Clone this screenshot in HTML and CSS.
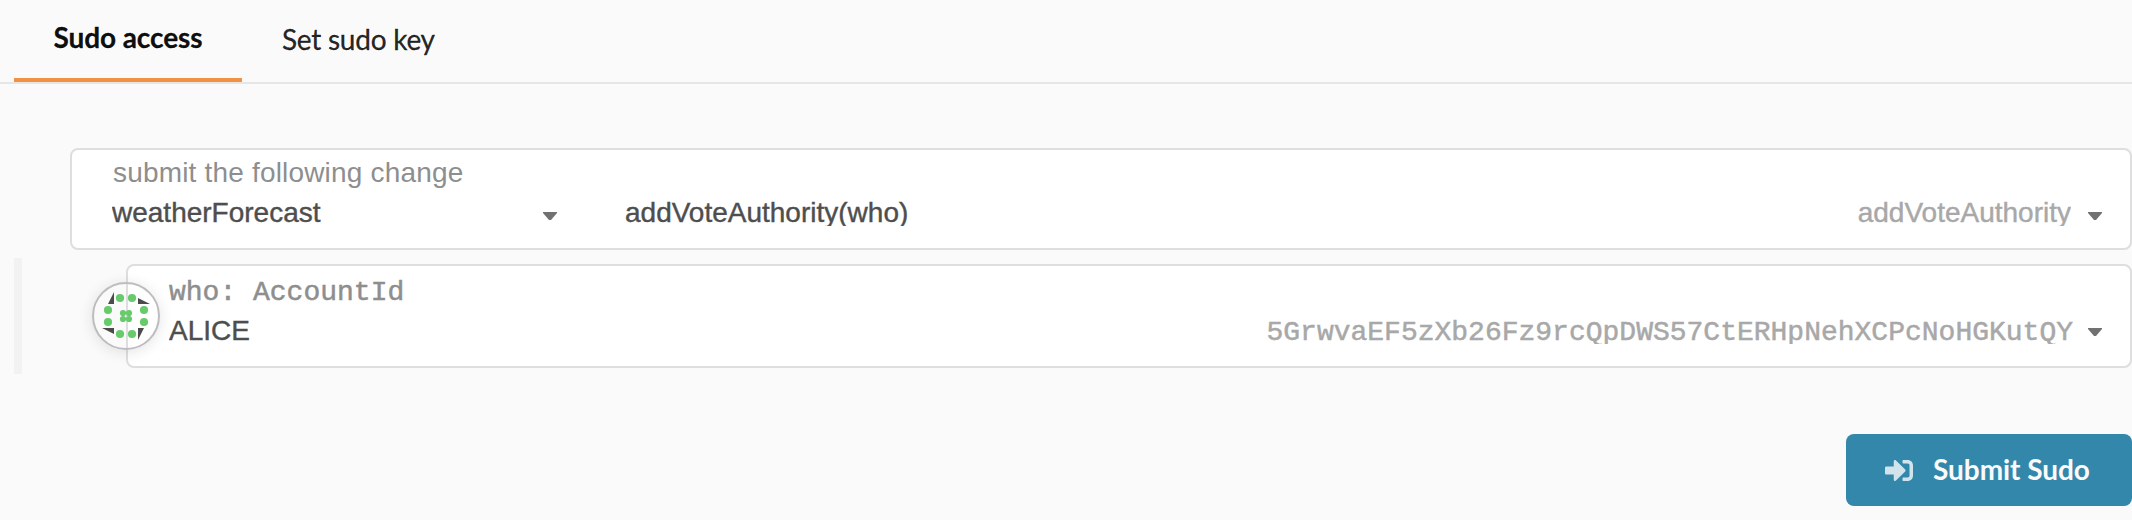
FILE: index.html
```html
<!DOCTYPE html>
<html lang="en">
<head>
<meta charset="utf-8">
<title>Sudo</title>
<link rel="stylesheet" href="styles.css">
</head>
<body>
<nav class="tabs">
  <a class="tab tab-active">Sudo access</a>
  <a class="tab">Set sudo key</a>
</nav>
<main class="content">
  <section class="card call-card">
    <div class="label">submit the following change</div>
    <div class="row">
      <div class="section-select">
        <span class="value">weatherForecast</span>
        <svg class="caret" viewBox="0 0 14 8"><path d="M0 0h14v1L8 8H6L0 1z"/></svg>
      </div>
      <div class="method-select">
        <span class="value">addVoteAuthority(who)</span>
        <span class="value muted">addVoteAuthority</span>
        <svg class="caret" viewBox="0 0 14 8"><path d="M0 0h14v1L8 8H6L0 1z"/></svg>
      </div>
    </div>
  </section>
  <section class="params">
    <div class="card account-card">
      <div class="identicon">
        <svg viewBox="94 284 64 64">
          <g fill="#4b4b4b">
            <path d="M114 292v12h-6z"/>
            <path d="M138 298l12 6h-12z"/>
            <path d="M138 328h6l-6 12z"/>
            <path d="M102 328h12v6z"/>
          </g>
          <g fill="#67cb6c">
            <circle cx="120" cy="298" r="4.100"/><circle cx="132" cy="298" r="4.100"/>
            <circle cx="108" cy="310" r="4.100"/><circle cx="144" cy="310" r="4.100"/>
            <circle cx="108" cy="322" r="4.100"/><circle cx="144" cy="322" r="4.100"/>
            <circle cx="120" cy="334" r="4.100"/><circle cx="132" cy="334" r="4.100"/>
            <circle cx="123" cy="313" r="3.100"/><circle cx="129" cy="313" r="3.100"/>
            <circle cx="123" cy="319" r="3.100"/><circle cx="129" cy="319" r="3.100"/>
          </g>
        </svg>
      </div>
      <div class="label mono">who: AccountId</div>
      <div class="row">
        <span class="value name">ALICE</span>
        <span class="value muted mono">5GrwvaEF5zXb26Fz9rcQpDWS57CtERHpNehXCPcNoHGKutQY</span>
        <svg class="caret" viewBox="0 0 14 8"><path d="M0 0h14v1L8 8H6L0 1z"/></svg>
      </div>
    </div>
  </section>
  <div class="actions">
    <button class="submit">
      <svg class="submit-icon" viewBox="0 64 512 384"><path d="M416 448h-84c-6.600 0-12-5.400-12-12v-40c0-6.600 5.400-12 12-12h84c17.700 0 32-14.300 32-32V160c0-17.700-14.300-32-32-32h-84c-6.600 0-12-5.400-12-12V76c0-6.600 5.400-12 12-12h84c53 0 96 43 96 96v192c0 53-43 96-96 96zm-47-209L201 71c-15-15-41-4.500-41 17v96H24c-13.300 0-24 10.700-24 24v96c0 13.300 10.700 24 24 24h136v96c0 21.500 26 32 41 17l168-168c9.300-9.400 9.300-24.600 0-34z"/></svg>
      <span class="submit-text">Submit Sudo</span>
    </button>
  </div>
</main>
</body>
</html>
```
FILE: styles.css
```css
* { box-sizing: border-box; }
body {
  margin: 0;
  height: 520px;
  overflow: hidden;
  background: #fafafa;
  font: 28px/28px "Liberation Sans", Arial, sans-serif;
  color: #4e4e4e;
}
.tabs {
  display: flex;
  height: 84px;
  padding-left: 14px;
  border-bottom: 2px solid #e6e6e6;
  font-family: Lato, sans-serif;
  color: rgba(0, 0, 0, 0.87);
}
.tab {
  height: 82px;
  padding: 25px 40px 0;
  white-space: nowrap;
  letter-spacing: -0.25px;
  -webkit-text-stroke: 0.3px;
}
.tab-active {
  width: 228px;
  padding: 23px 0 0;
  text-align: center;
  border-bottom: 4px solid #f2913f;
  font-weight: 700;
  letter-spacing: -0.1px;
  color: rgba(0, 0, 0, 0.95);
}
.content { padding: 64px 0 0 14px; }
.card {
  background: #fff;
  border: 2px solid #dedede;
  border-radius: 8px;
}
.call-card {
  height: 102px;
  margin-left: 56px;
  padding: 9px 28px 0 40px;
}
.label { color: #8e8e8e; white-space: nowrap; }
.call-card .label { margin: 0 0 11px 1px; letter-spacing: 0.18px; }
.row { display: flex; height: 28px; }
.section-select { display: flex; justify-content: space-between; width: 445px; }
.method-select { display: flex; flex: 1; margin-left: 68px; }
.value {
  height: 28px;
  overflow: hidden;
  line-height: 30px;
  white-space: nowrap;
  -webkit-text-stroke: 0.4px;
}
.muted { margin-left: auto; color: #a8a8a8; }
.caret { flex: none; width: 14px; height: 8px; margin: 14px 0 0 17px; fill: #717171; }
.mono {
  font-family: "Courier 10 Pitch", "Nimbus Mono PS", "Liberation Mono", monospace;
  -webkit-text-stroke: 0.5px;
}
.params {
  height: 116px;
  margin-top: 8px;
  padding: 6px 0 6px 104px;
  border-left: 8px solid #f2f2f2;
}
.account-card {
  position: relative;
  height: 104px;
  padding: 12px 28px 0 41px;
}
.account-card .label { line-height: 30px; margin-bottom: 8px; }
.account-card .value.mono { line-height: 33px; }
.account-card .caret { margin: 12px 0 0 15px; }
.identicon {
  position: absolute;
  left: -36px;
  top: 16px;
  width: 68px;
  height: 68px;
  border: 2px solid #bdbdbd;
  border-radius: 50%;
  box-shadow: 0 2px 14px rgba(34, 36, 38, 0.12);
}
/* The translucent icon leaves the card's edge visible through it. */
.identicon svg { display: block; width: 64px; height: 64px; }
.actions { display: flex; justify-content: flex-end; margin-top: 60px; }
.submit {
  display: flex;
  align-items: center;
  width: 286px;
  height: 72px;
  padding: 0 0 0 39px;
  border: 0;
  border-radius: 8px;
  background: #3387ab;
  color: #fafafa;
  font: 700 28px/28px Lato, sans-serif;
}
.submit-text { margin-bottom: 2px; letter-spacing: -0.05px; white-space: nowrap; }
.submit-icon { width: 28px; height: 21px; margin-right: 20px; fill: #d1e3eb; }
```
